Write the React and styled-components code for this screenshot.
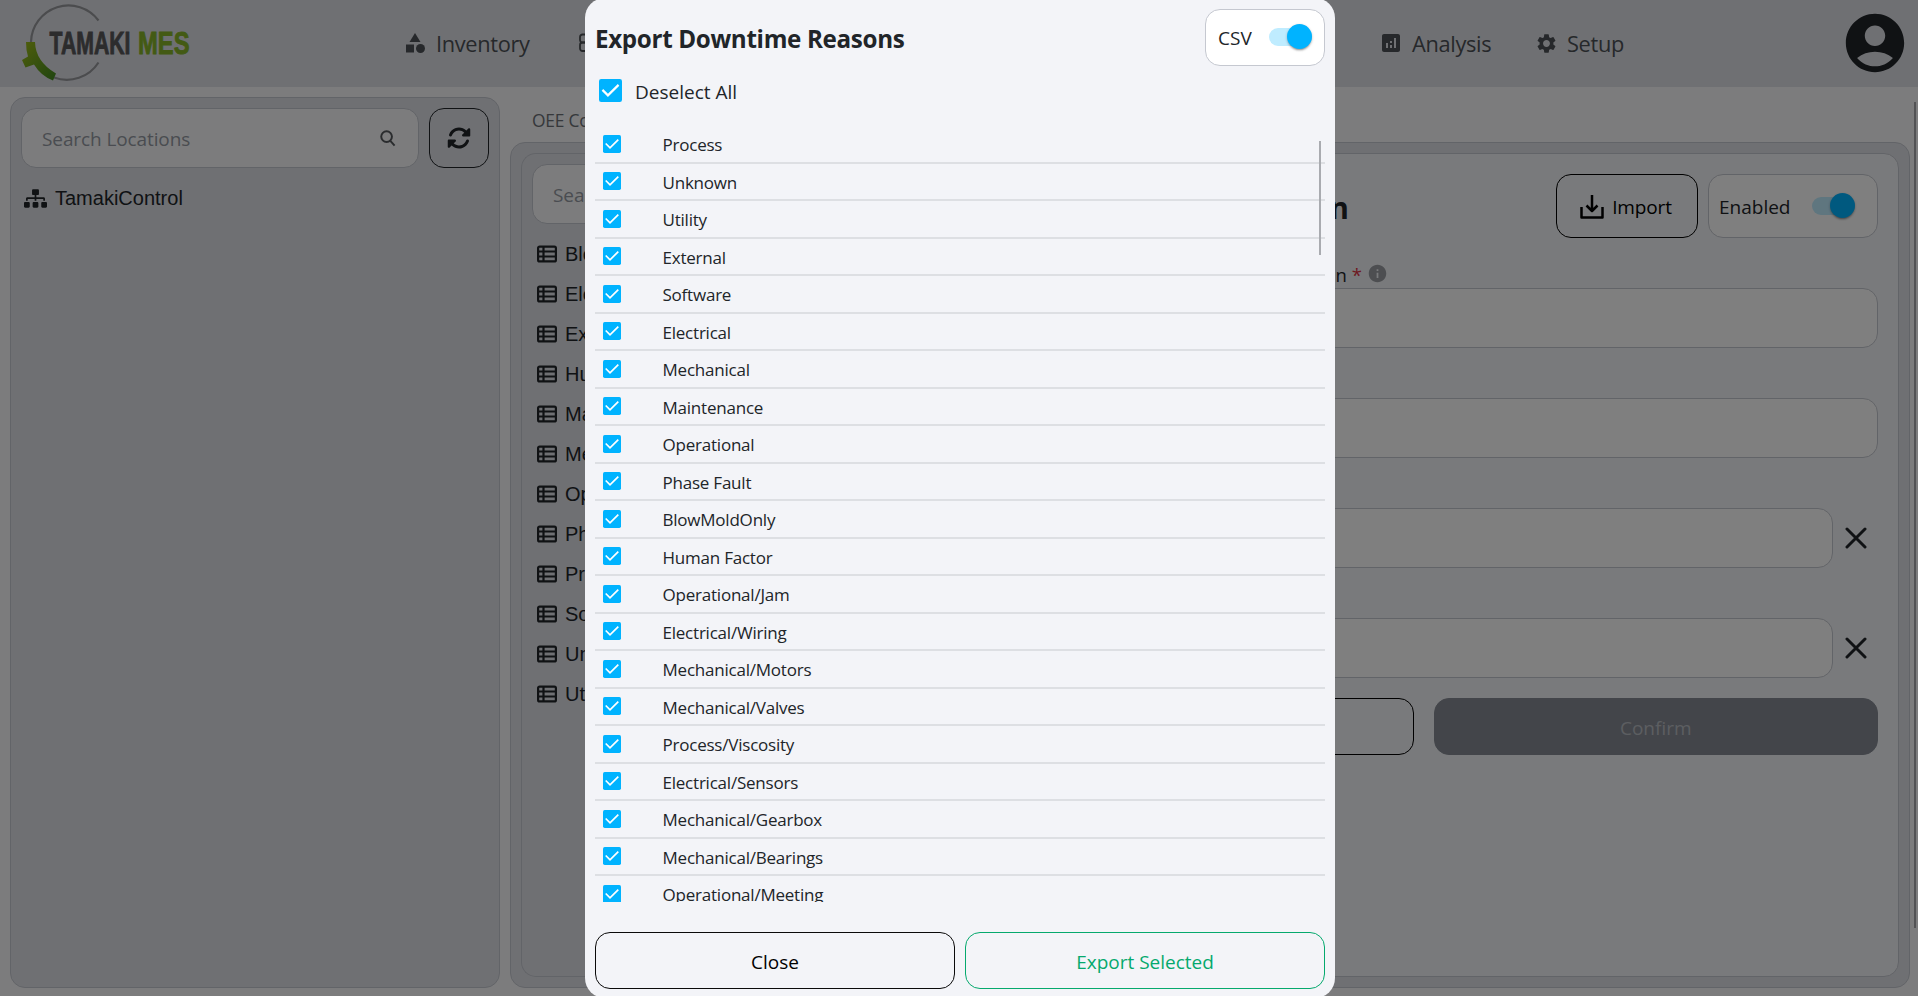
import React from "react";
import styled, { createGlobalStyle } from "styled-components";
import { MdCategory, MdAnalytics, MdSettings, MdAccountCircle, MdInfo } from "react-icons/md";
import { FaSitemap } from "react-icons/fa";
import { FaRotate } from "react-icons/fa6";

const Global = createGlobalStyle`
  * { box-sizing: border-box; }
  html, body { margin: 0; height: 100%; overflow: hidden; background: #f8f9fa; }
  body { font-family: "Open Sans", "Noto Sans", sans-serif; font-size: 19px; color: #212529; }
  #root { height: 100%; }
`;

const line = "#c5c8d0";
const panel = "#dfe1e7";

const Page = styled.div`
  height: 996px;
  display: flex;
  flex-direction: column;
  overflow: hidden;
`;

const Header = styled.header`
  height: 87px;
  flex: none;
  display: flex;
  align-items: center;
  justify-content: space-between;
  padding: 0 8px 2px 20px;
  background: ${panel};
`;

const Nav = styled.nav`
  display: flex;
  align-items: center;
  width: 1222px;
  margin-left: 208px;
  margin-right: auto;
  padding-top: 1px;
`;

const NavItem = styled.span`
  display: flex;
  align-items: center;
  gap: 9px;
  width: ${(p) => p.$w}px;
  color: #4d5156;
  font-size: 21.8px;
  letter-spacing: -0.33px;
  white-space: nowrap;
  svg { flex: none; }
`;

const Main = styled.main`
  flex: 1;
  min-height: 0;
  display: flex;
  gap: 10px;
  padding: 10px 8px 8px 10px;
`;

const Sidebar = styled.aside`
  width: 490px;
  flex: none;
  border: 1px solid ${line};
  border-radius: 15px;
  background: ${panel};
  padding: 10px;
`;

const SearchRow = styled.div`
  display: flex;
  gap: 10px;
`;

const SearchBox = styled.div`
  flex: 1;
  height: 60px;
  display: flex;
  align-items: center;
  justify-content: space-between;
  border: 1px solid ${line};
  border-radius: 15px;
  background: #f8f9fa;
  color: #9599a3;
  padding: 2px 22px 0 20px;
  font-size: 19px;
  letter-spacing: -0.1px;
  white-space: nowrap;
  svg { margin-bottom: 2px; }
`;

const RefreshButton = styled.button`
  width: 60px;
  height: 60px;
  border: 1px solid #212529;
  border-radius: 15px;
  background: transparent;
  color: #212529;
  display: flex;
  align-items: center;
  justify-content: center;
  padding: 0;
`;

const TreeItem = styled.div`
  height: 40px;
  display: flex;
  align-items: center;
  gap: 8px;
  padding-left: ${(p) => p.$indent}px;
  font-family: "Liberation Sans", Arial, sans-serif;
  font-size: 20px;
  color: #212529;
  white-space: nowrap;
  svg { flex: none; }
`;

const Tree = styled.div`
  padding-top: 10px;
`;

const Content = styled.section`
  flex: 1;
  display: flex;
  flex-direction: column;
`;

const Breadcrumb = styled.div`
  height: 45px;
  padding: 8px 0 0 22px;
  font-size: 17.4px;
  letter-spacing: -0.2px;
  line-height: 30px;
  color: #6c7076;
`;

const Workspace = styled.div`
  flex: 1;
  display: flex;
  border: 1px solid ${line};
  border-radius: 15px;
  background: ${panel};
  padding: 10px;
`;

const ReasonList = styled.div`
  width: 420px;
  border: 1px solid ${line};
  border-right: 0;
  border-radius: 15px 0 0 15px;
  padding: 10px;
`;

const Form = styled.div`
  flex: 1;
  border: 1px solid ${line};
  border-radius: 0 15px 15px 0;
  background: #f3f5f8;
  padding: 20px 20px 0 27px;
`;

const FormHead = styled.div`
  height: 64px;
  display: flex;
  align-items: center;
  justify-content: flex-end;
  gap: 10px;
`;

const FormTitle = styled.h1`
  margin: 0 auto 0 0;
  width: 380px;
  text-align: right;
  font-size: 29.5px;
  line-height: 40px;
  padding-top: 4px;
  white-space: nowrap;
`;

const ImportButton = styled.button`
  width: 142px;
  height: 64px;
  display: flex;
  align-items: center;
  justify-content: center;
  gap: 8px;
  border: 1px solid #000;
  border-radius: 15px;
  background: transparent;
  color: #000;
  font: inherit;
  letter-spacing: -0.15px;
  padding: 2px 2px 0 0;
`;

const ToggleBox = styled.div`
  width: ${(p) => p.$w}px;
  height: ${(p) => p.$h}px;
  display: flex;
  align-items: center;
  justify-content: space-between;
  padding: ${(p) => p.$pad};
  border: 1px solid ${line};
  border-radius: 15px;
  background: #fff;
`;

const Track = styled.span`
  width: 43px;
  height: 18px;
  border-radius: 9px;
  background: #bfecff;
  display: flex;
  align-items: center;
  justify-content: flex-end;
  margin-bottom: 3px;
`;

const Thumb = styled.span`
  width: 25px;
  height: 25px;
  flex: none;
  border-radius: 50%;
  background: #00b3ff;
  box-shadow: 0 2px 2px -1px rgba(0,0,0,.3), 0 1px 3px rgba(0,0,0,.22);
`;

const Field = styled.div`
  height: 110px;
`;

const FieldLabel = styled.div`
  height: 50px;
  display: flex;
  align-items: flex-end;
  gap: 5px;
  width: 419px;
  justify-content: flex-end;
  padding-bottom: 1px;
  font-size: 18.5px;
  line-height: 24px;
  white-space: nowrap;
  svg { margin-bottom: 3px; }
`;

const Star = styled.span`
  color: #dc3545;
`;

const FieldRow = styled.div`
  display: flex;
  align-items: center;
  justify-content: space-between;
  padding-right: ${(p) => (p.$clear ? 11 : 0)}px;
`;

const FieldInput = styled.div`
  flex: 1;
  height: 60px;
  border: 1px solid ${line};
  border-radius: 15px;
  background: #fff;
  margin-right: ${(p) => (p.$clear ? 12 : 0)}px;
`;

const FormActions = styled.div`
  display: grid;
  grid-template-columns: 1fr 1fr;
  gap: 20px;
  padding-top: 20px;
`;

const Button = styled.button`
  height: 57px;
  border-radius: 15px;
  border: 1px solid ${(p) => p.$line};
  background: ${(p) => p.$bg || "transparent"};
  color: ${(p) => p.$fg};
  font: inherit;
  padding: 3px 0 0;
`;

const PageScroll = styled.div`
  position: absolute;
  right: 2px;
  top: 102px;
  width: 2px;
  height: 826px;
  background: #a6a7aa;
`;

const Backdrop = styled.div`
  position: fixed;
  inset: 0;
  background: rgba(0, 0, 0, 0.5);
  display: flex;
  align-items: center;
  justify-content: center;
`;

const Modal = styled.div`
  width: 750px;
  height: 1000px;
  flex: none;
  margin-left: 2px;
  border-radius: 20px;
  background: #f3f4f8;
  padding: 11px 10px 9px;
  display: flex;
  flex-direction: column;
`;

const ModalHead = styled.div`
  display: flex;
  justify-content: space-between;
`;

const ModalTitle = styled.h2`
  margin: 0;
  padding-top: 12px;
  font-size: 24.2px;
  line-height: 36px;
  letter-spacing: -0.33px;
`;

const SelectAll = styled.div`
  height: 50px;
  display: flex;
  align-items: center;
  gap: 13px;
  padding-left: 4px;
  svg { margin-bottom: 1px; }
`;

const SelectAllText = styled.span`
  padding-top: 2px;
`;

const Scroller = styled.div`
  position: relative;
  height: 776px;
  margin-top: 10px;
  overflow: hidden;
`;

const Row = styled.div`
  height: 37.5px;
  border-bottom: 2px solid #dddfe3;
  display: flex;
  align-items: center;
  gap: 41.5px;
  padding-left: 8px;
  font-size: 17px;
  letter-spacing: -0.22px;
`;

const RowText = styled.span`
  padding-top: 2px;
`;

const ListThumb = styled.div`
  position: absolute;
  right: 4px;
  top: 15px;
  width: 2px;
  height: 114px;
  background: #a9abb0;
`;

const ModalActions = styled.div`
  display: grid;
  grid-template-columns: 1fr 1fr;
  gap: 10px;
  margin-top: auto;
`;

const Logo = () => (
  <svg width="175" height="85" viewBox="20 0 175 85">
    <defs>
      <linearGradient id="leaf" x1="0" y1="0" x2="1" y2="1">
        <stop offset="0" stopColor="#a0bc18" />
        <stop offset="1" stopColor="#3f8a22" />
      </linearGradient>
    </defs>
    <path d="M98.500 20.500A37.500 37.500 0 0 0 31 42M54 77.500A37.500 37.500 0 0 0 98.500 62.500" fill="none" stroke="#97989c" strokeWidth="2.200" />
    <path d="M26 42H35Q35.500 61.500 56 73.500L53 80.500Q41 76 34 64.500L25.500 67.500L22 60L28 56.500Q26 50.500 26 42Z" fill="url(#leaf)" />
    <text x="49.500" y="53.500" textLength="81" lengthAdjust="spacingAndGlyphs" fontFamily="Liberation Sans, Arial, sans-serif" fontWeight="700" fontSize="32" fill="#58585a" stroke="#58585a" strokeWidth="0.900">TAMAKI</text>
    <text x="138" y="53.500" textLength="51.500" lengthAdjust="spacingAndGlyphs" fontFamily="Liberation Sans, Arial, sans-serif" fontWeight="700" fontSize="32" fill="#86b529" stroke="#86b529" strokeWidth="0.900">MES</text>
  </svg>
);

const StackIcon = () => (
  <svg width="22" height="20" viewBox="0 0 22 20" fill="none" stroke="currentColor" strokeWidth="1.800">
    <rect x="1" y="1.500" width="20" height="8" rx="2.500" />
    <rect x="1" y="9.500" width="20" height="8.500" rx="2.500" />
  </svg>
);

const SearchIcon = () => (
  <svg width="16" height="17" viewBox="0 0 17 18" fill="none" stroke="#55585d" strokeWidth="2.100">
    <circle cx="7" cy="7" r="5.700" />
    <path d="M11 11.500L15.500 16.500" />
  </svg>
);

const ListIcon = () => (
  <svg width="20" height="18" viewBox="0 0 20 18" fill="none" stroke="#212529">
    <rect x="1.100" y="1.600" width="17.800" height="14.800" rx="1.500" strokeWidth="2.200" />
    <path d="M6.500 1.500V16.500M1 6.500H19M1 11.500H19" strokeWidth="2.200" />
  </svg>
);

const ImportIcon = () => (
  <svg width="24" height="24" viewBox="0 0 24 24" fill="none" stroke="#000" strokeWidth="2.500" strokeLinejoin="round">
    <path d="M1.500 12V22.500H22.500V12M12 0V16M6.500 10.500L12 16L17.500 10.500" />
  </svg>
);

const CloseIcon = () => (
  <svg width="22" height="22" viewBox="0 0 22 22" fill="none" stroke="#212529" strokeWidth="3" strokeLinecap="round">
    <path d="M2 2L20 20M20 2L2 20" />
  </svg>
);

const Check = ({ size }) => (
  <svg width={size} height={size} viewBox="0 0 18 18">
    <rect width="18" height="18" rx="1.700" fill="#00b3ff" />
    <path d="M2.700 8.500L7 12.800L15.300 4.600" fill="none" stroke="#fff" strokeWidth="1.700" />
  </svg>
);

const Switch = () => (
  <Track>
    <Thumb />
  </Track>
);

const categories = ["Blow Mold Only", "Electrical", "External", "Human Factor", "Maintenance", "Mechanical", "Operational", "Phase Fault", "Process", "Software", "Unknown", "Utility"];

const reasons = ["Process", "Unknown", "Utility", "External", "Software", "Electrical", "Mechanical", "Maintenance", "Operational", "Phase Fault", "BlowMoldOnly", "Human Factor", "Operational/Jam", "Electrical/Wiring", "Mechanical/Motors", "Mechanical/Valves", "Process/Viscosity", "Electrical/Sensors", "Mechanical/Gearbox", "Mechanical/Bearings", "Operational/Meeting"];

export default function App() {
  return (
    <>
      <Global />
      <Page>
        <Header>
          <Logo />
          <Nav>
            <NavItem $w={176}><MdCategory size={24} />Inventory</NavItem>
            <NavItem $w={800}><StackIcon /></NavItem>
            <NavItem $w={156}><MdAnalytics size={24} />Analysis</NavItem>
            <NavItem $w={90}><MdSettings size={23} />Setup</NavItem>
          </Nav>
          <MdAccountCircle size={70} />
        </Header>
        <Main>
          <Sidebar>
            <SearchRow>
              <SearchBox>Search Locations<SearchIcon /></SearchBox>
              <RefreshButton><FaRotate size={24} /></RefreshButton>
            </SearchRow>
            <Tree>
              <TreeItem $indent={3}><FaSitemap size={23} />TamakiControl</TreeItem>
            </Tree>
          </Sidebar>
          <Content>
            <Breadcrumb>OEE Configuration</Breadcrumb>
            <Workspace>
              <ReasonList>
                <SearchBox>Search</SearchBox>
                <Tree>
                  {categories.map((c) => (
                    <TreeItem key={c} $indent={5}><ListIcon />{c}</TreeItem>
                  ))}
                </Tree>
              </ReasonList>
              <Form>
                <FormHead>
                  <FormTitle>Reason Configuration</FormTitle>
                  <ImportButton><ImportIcon />Import</ImportButton>
                  <ToggleBox $w={170} $h={64} $pad="2px 22px 0 10px"><span>Enabled</span><Switch /></ToggleBox>
                </FormHead>
                <Field>
                  <FieldLabel>Description <Star>*</Star><MdInfo size={21} color="#9a9da3" /></FieldLabel>
                  <FieldRow><FieldInput /></FieldRow>
                </Field>
                <Field>
                  <FieldLabel />
                  <FieldRow><FieldInput /></FieldRow>
                </Field>
                <Field>
                  <FieldLabel />
                  <FieldRow $clear><FieldInput $clear /><CloseIcon /></FieldRow>
                </Field>
                <Field>
                  <FieldLabel />
                  <FieldRow $clear><FieldInput $clear /><CloseIcon /></FieldRow>
                </Field>
                <FormActions>
                  <Button $line="#000" $fg="#000" />
                  <Button $line="#868b95" $bg="#868b95" $fg="#b9bcc2">Confirm</Button>
                </FormActions>
              </Form>
            </Workspace>
          </Content>
        </Main>
        <PageScroll />
      </Page>
      <Backdrop>
        <Modal>
          <ModalHead>
            <ModalTitle>Export Downtime Reasons</ModalTitle>
            <ToggleBox $w={120} $h={57} $pad="1px 12px 0 12px"><span>CSV</span><Switch /></ToggleBox>
          </ModalHead>
          <SelectAll><Check size={23} /><SelectAllText>Deselect All</SelectAllText></SelectAll>
          <Scroller>
            {reasons.map((r) => (
              <Row key={r}><Check size={18} /><RowText>{r}</RowText></Row>
            ))}
            <ListThumb />
          </Scroller>
          <ModalActions>
            <Button $line="#0a0a0a" $fg="#000">Close</Button>
            <Button $line="#05a96d" $fg="#05a96d">Export Selected</Button>
          </ModalActions>
        </Modal>
      </Backdrop>
    </>
  );
}
